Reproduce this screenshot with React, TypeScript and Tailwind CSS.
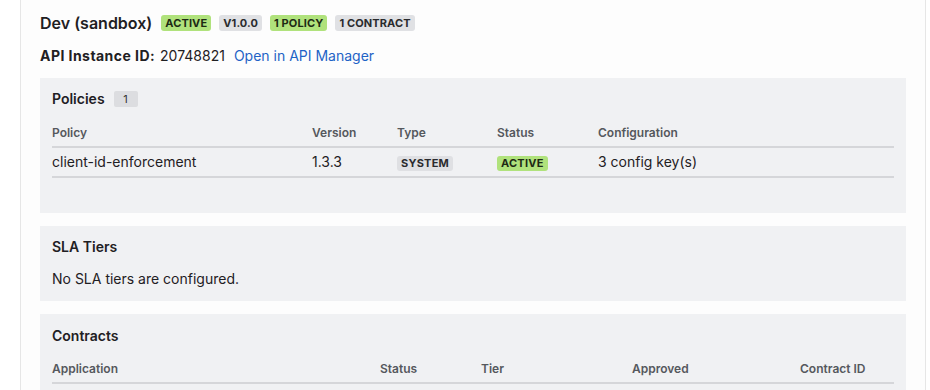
import React from "react";

const Badge = ({ children, tone }: { children: React.ReactNode; tone: "green" | "gray" }) => (
  <span
    className={
      "inline-flex h-[16px] items-center rounded-[3px] px-[4px] text-[11px] font-bold uppercase leading-none tracking-[0.01em] text-[#1e2a14] " +
      (tone === "green" ? "bg-[#b0e27c]" : "bg-[#e0e1e4] text-[#2a2b2e]")
    }
  >
    {children}
  </span>
);

const SmallBadge = ({ children, tone }: { children: React.ReactNode; tone: "green" | "gray" }) => (
  <span
    className={
      "inline-flex h-[15px] items-center rounded-[3px] px-[4px] text-[11px] font-bold uppercase leading-none tracking-[0.02em] " +
      (tone === "green" ? "bg-[#b0e27c] text-[#1e2a14]" : "bg-[#dfe0e3] text-[#2a2b2e]")
    }
  >
    {children}
  </span>
);

export default function App() {
  return (
    <div
      className="min-h-[390px] w-[930px] bg-white"
      style={{ fontFamily: "Inter, 'Noto Sans', sans-serif" }}
    >
      <div className="ml-[20px] h-[390px] w-[906px] overflow-hidden border-x border-[#e6e6e6] bg-[#fdfdfd] px-[19px] pt-[11px] text-[#1f2023]">
        <div className="flex h-[24px] items-center">
          <h2 className="text-[16px] font-semibold leading-[24px]">Dev (sandbox)</h2>
          <div className="ml-[9px] flex items-center gap-[8px]">
            <Badge tone="green">Active</Badge>
            <Badge tone="gray">V1.0.0</Badge>
            <Badge tone="green">1 Policy</Badge>
            <Badge tone="gray">1 Contract</Badge>
          </div>
        </div>
        <div className="mt-[11px] flex h-[20px] items-center text-[14px] leading-[20px]">
          <span className="font-bold tracking-[0.032em]">API Instance ID:</span>
          <span className="ml-[5px]">20748821</span>
          <a className="ml-[9px] text-[#1f63c6]" href="#">
            Open in API Manager
          </a>
        </div>

        <div className="mt-[12px] flex flex-col gap-[13px]">
          <section className="bg-[#f0f1f3] px-[12px] pb-[35px] pt-[11px]">
            <div className="flex h-[20px] items-center">
              <h3 className="text-[14px] font-semibold leading-[20px]">Policies</h3>
              <span className="ml-[9px] inline-flex h-[16px] w-[24px] items-center justify-center rounded-[2px] bg-[#dcdde0] text-[11px] leading-none text-[#333]">
                1
              </span>
            </div>
            <table className="mt-[12px] w-full border-collapse text-left">
              <thead>
                <tr className="border-b-2 border-[#d5d6d9] text-[12px] font-semibold text-[#55585d]">
                  <th className="w-[260px] pb-[5px] pt-[4px] font-semibold leading-[16px]">Policy</th>
                  <th className="w-[85px] pb-[5px] pt-[4px] font-semibold leading-[16px]">Version</th>
                  <th className="w-[100px] pb-[5px] pt-[4px] font-semibold leading-[16px]">Type</th>
                  <th className="w-[101px] pb-[5px] pt-[4px] font-semibold leading-[16px]">Status</th>
                  <th className="pb-[5px] pt-[4px] font-semibold leading-[16px]">Configuration</th>
                </tr>
              </thead>
              <tbody>
                <tr className="border-b-2 border-[#d5d6d9] text-[14px] leading-[20px]">
                  <td className="py-[4px]">client-id-enforcement</td>
                  <td className="py-[4px]">1.3.3</td>
                  <td className="py-[4px]">
                    <SmallBadge tone="gray">System</SmallBadge>
                  </td>
                  <td className="py-[4px]">
                    <SmallBadge tone="green">Active</SmallBadge>
                  </td>
                  <td className="py-[4px]">3 config key(s)</td>
                </tr>
              </tbody>
            </table>
          </section>

          <section className="bg-[#f0f1f3] px-[12px] pb-[12px] pt-[11px]">
            <h3 className="text-[14px] font-semibold leading-[20px]">SLA Tiers</h3>
            <p className="mt-[12px] text-[14px] leading-[20px]">No SLA tiers are configured.</p>
          </section>

          <section className="bg-[#f0f1f3] px-[12px] pb-[12px] pt-[12px]">
            <h3 className="text-[14px] font-semibold leading-[20px]">Contracts</h3>
            <table className="mt-[11px] w-full border-collapse text-left">
              <thead>
                <tr className="border-b-2 border-[#d5d6d9] text-[12px] text-[#55585d]">
                  <th className="w-[328px] pb-[5px] pt-[4px] font-semibold leading-[16px]">Application</th>
                  <th className="w-[101px] pb-[5px] pt-[4px] font-semibold leading-[16px]">Status</th>
                  <th className="w-[151px] pb-[5px] pt-[4px] font-semibold leading-[16px]">Tier</th>
                  <th className="w-[168px] pb-[5px] pt-[4px] font-semibold leading-[16px]">Approved</th>
                  <th className="pb-[5px] pt-[4px] font-semibold leading-[16px]">Contract ID</th>
                </tr>
              </thead>
            </table>
          </section>
        </div>
      </div>
    </div>
  );
}
